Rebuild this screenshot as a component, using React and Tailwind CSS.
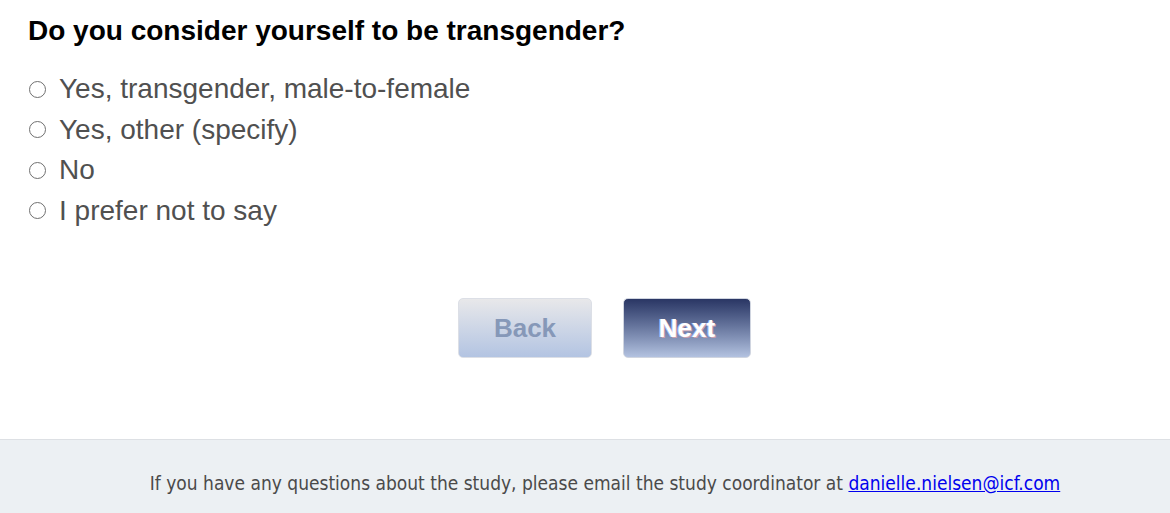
const OPTIONS = [
  "Yes, transgender, male-to-female",
  "Yes, other (specify)",
  "No",
  "I prefer not to say",
];

export default function App() {
  return (
    <div className="flex flex-col h-[513px] w-[1170px] bg-white font-['Liberation_Sans',Arial,sans-serif]">
      <div className="flex-1 pl-[28px] pt-[13px]">
        <h1 className="text-[28px] leading-[36px] font-bold text-black">Do you consider yourself to be transgender?</h1>
        <div className="mt-[20px] flex flex-col">
          {OPTIONS.map((o) => (
            <label key={o} className="flex items-center h-[40.5px] text-[28px] text-[#505050]">
              <span className="w-[17px] h-[17px] ml-[1px] mr-[13px] rounded-full border border-[#6f6f6f] bg-white" />
              {o}
            </label>
          ))}
        </div>
        <div className="mt-[67px] flex justify-center gap-[31px] pl-[11px]">
          <button className="w-[134px] h-[60px] rounded-[5px] border border-[#dcdfe6] bg-gradient-to-b from-[#e8e8ea] to-[#b3c4e2] text-[26px] font-bold text-[#8698b8]">
            Back
          </button>
          <button className="w-[128px] h-[60px] rounded-[5px] border border-[#d0d5e0] bg-gradient-to-b from-[#2a3664] to-[#b3c2e0] text-[26px] font-bold text-white [text-shadow:1px_1px_0_#c9a0b0,-1px_0_0_#a8c4ff]">
            Next
          </button>
        </div>
      </div>
      <footer className="h-[74px] border-t border-[#dde0e4] bg-[#ecf0f3] flex items-center justify-center pl-[40px] pt-[14px]">
        <p className="font-['Liberation_Sans_Narrow','DejaVu_Sans_Condensed',sans-serif] text-[19px] text-[#4a4a4a]">
          If you have any questions about the study, please email the study coordinator at{" "}
          <a href="#" className="text-[#0000ee] underline">danielle.nielsen@icf.com</a>
        </p>
      </footer>
    </div>
  );
}
